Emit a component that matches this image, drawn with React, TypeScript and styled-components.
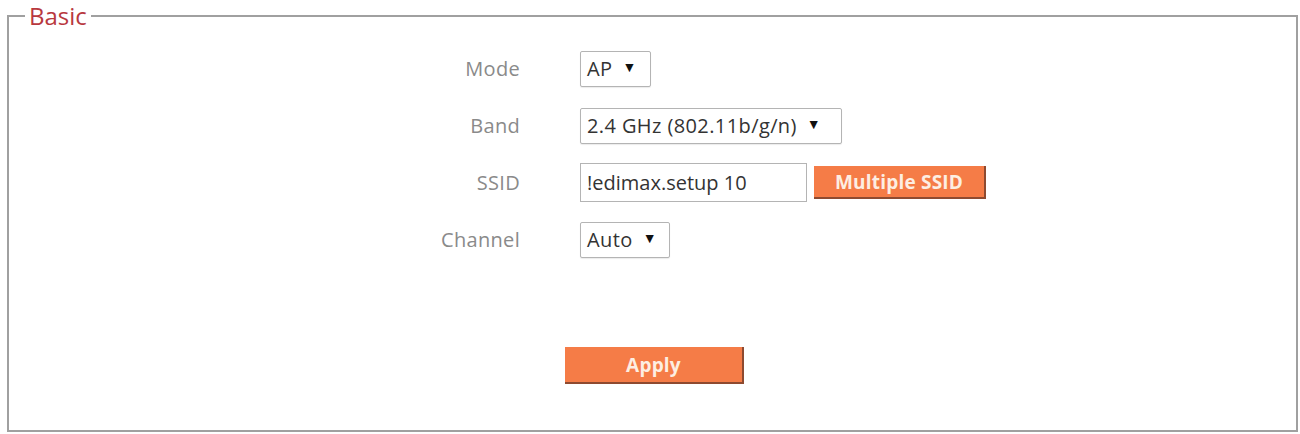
import React from "react";
import styled, { createGlobalStyle } from "styled-components";

const Global = createGlobalStyle`
  html, body { margin: 0; padding: 0; background: #fff; }
  body { font-family: "Open Sans", "Noto Sans", Arial, sans-serif; }
`;

const Page = styled.div`
  width: 1300px;
  height: 434px;
  box-sizing: border-box;
  padding: 0 2px 2px 7px;
`;

const Fieldset = styled.fieldset`
  margin: 0;
  padding: 8px 0 45px 0;
  min-width: 0;
  height: 432px;
  box-sizing: border-box;
  border: 2px solid #a0a0a0;
  display: flex;
  flex-direction: column;
`;

const Legend = styled.legend`
  margin-left: 16px;
  padding: 0 4px;
  font-size: 24px;
  line-height: 32px;
  color: #b8383e;
`;

const Row = styled.div`
  display: grid;
  grid-template-columns: 511px auto;
  column-gap: 60px;
  align-items: center;
  height: 57px;
`;

const Label = styled.div`
  justify-self: end;
  font-size: 20px;
  color: #8a8a8a;
  letter-spacing: 0.3px;
`;

const Controls = styled.div`
  display: flex;
  align-items: center;
  gap: 7px;
`;

const Select = styled.div<{ $w: number }>`
  width: ${(p) => p.$w}px;
  height: 36px;
  box-sizing: border-box;
  border: 1.5px solid #b4b4b4;
  border-radius: 2px;
  display: flex;
  align-items: center;
  padding: 0 8px 0 6px;
  gap: 10px;
  font-size: 20px;
  letter-spacing: 0.4px;
  color: #333;
  background: #fff;
  box-shadow: 0 1px 1px rgba(0, 0, 0, 0.08);
`;

const Arrow = styled.span`
  font-size: 14px;
  color: #111;
  margin-top: -4px;
`;

const TextInput = styled.div`
  width: 227px;
  height: 39px;
  box-sizing: border-box;
  border: 1.5px solid #b4b4b4;
  display: flex;
  align-items: center;
  padding: 0 6px;
  font-size: 20px;
  color: #333;
`;

const OrangeButton = styled.button<{ $w: number; $h: number }>`
  width: ${(p) => p.$w}px;
  height: ${(p) => p.$h}px;
  box-sizing: border-box;
  border: none;
  border-right: 2px solid #8e4a30;
  border-bottom: 2px solid #8e4a30;
  background: #f57c47;
  color: #fdeee2;
  font-family: "Open Sans", Arial, sans-serif;
  font-weight: 700;
  font-size: 19px;
  letter-spacing: 0.2px;
  padding: 0;
  cursor: pointer;
`;

const ApplyRow = styled.div`
  margin-top: 79px;
  padding-left: 4px;
  display: flex;
  justify-content: center;
`;

export default function App() {
  return (
    <>
      <Global />
      <Page>
        <Fieldset>
          <Legend>Basic</Legend>
          <Row>
            <Label>Mode</Label>
            <Controls>
              <Select $w={71}>
                AP <Arrow>▼</Arrow>
              </Select>
            </Controls>
          </Row>
          <Row>
            <Label>Band</Label>
            <Controls>
              <Select $w={262}>
                2.4 GHz (802.11b/g/n) <Arrow>▼</Arrow>
              </Select>
            </Controls>
          </Row>
          <Row>
            <Label>SSID</Label>
            <Controls>
              <TextInput>!edimax.setup 10</TextInput>
              <OrangeButton $w={172} $h={33}>Multiple SSID</OrangeButton>
            </Controls>
          </Row>
          <Row>
            <Label>Channel</Label>
            <Controls>
              <Select $w={90}>
                Auto <Arrow>▼</Arrow>
              </Select>
            </Controls>
          </Row>
          <ApplyRow>
            <OrangeButton $w={179} $h={37}>Apply</OrangeButton>
          </ApplyRow>
        </Fieldset>
      </Page>
    </>
  );
}
